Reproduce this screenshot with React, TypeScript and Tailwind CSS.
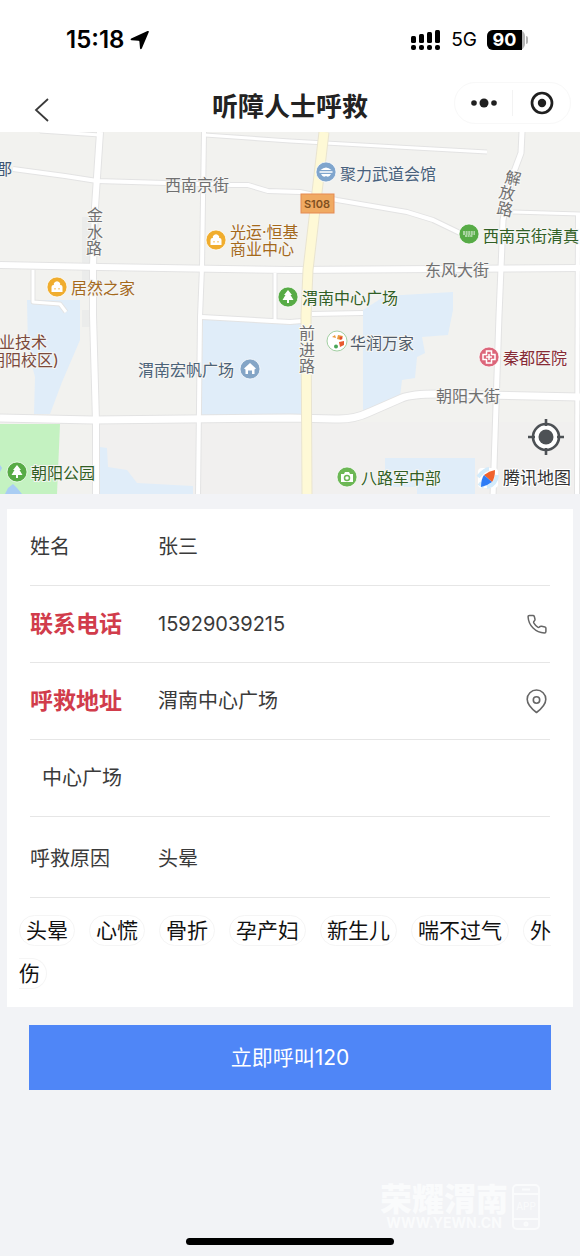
import { useState, type ReactNode } from 'react';

const REASONS = ['头晕', '心慌', '骨折', '孕产妇', '新生儿', '喘不过气', '外伤'];

const ROADS: { d: string; w: number }[] = [
  { d: 'M40 -1L100 3', w: 3 },
  { d: 'M13 37L65 44L97 49L166 51L232 53L248 53L268 59L300 60L337 68L407 80L433 88L460 101', w: 4 },
  { d: 'M205 3L290 9L487 20', w: 3 },
  { d: 'M204 0L202 135L200 185L198 365', w: 4 },
  { d: 'M513 80L580 82', w: 3 },
  { d: 'M578 82L577 365', w: 4 },
  { d: 'M33 138L33 170L60 172L66 180', w: 3 },
  { d: 'M275 141L275 190', w: 3 },
  { d: 'M202 185L290 190L302 189', w: 4 },
  { d: 'M312 182L363 181', w: 4 },
  { d: 'M522 0L521 21L512 45L503 88L501 136L499 183L493 365', w: 5 },
  { d: 'M100 0L95 75L93 134L93 183L96 290L96 365', w: 6 },
  { d: 'M0 133L100 135L290 138L580 136', w: 6 },
  { d: 'M0 286L93 288L290 286L335 287Q353 288 370 280L402 266Q412 262 437 262L580 265', w: 7 },
];

function MapLabel({ x, y, color, children }: { x: number; y: number; color: string; children: ReactNode }) {
  return (
    <text x={x} y={y} fill={color} stroke="#f5f5f3" strokeWidth={2} paintOrder="stroke">
      {children}
    </text>
  );
}

function RoadName({ name, points, angle = 0 }: { name: string; points: [number, number][]; angle?: number }) {
  return (
    <g fill="#707070" textAnchor="middle" stroke="#f8f8f6" strokeWidth={2} paintOrder="stroke">
      {points.map(([x, y], i) => (
        <text key={name[i]} x={x} y={y + 6} transform={`rotate(${angle} ${x} ${y})`}>
          {name[i]}
        </text>
      ))}
    </g>
  );
}

function Poi({ x, y, color, children }: { x: number; y: number; color: string; children: ReactNode }) {
  return (
    <g transform={`translate(${x} ${y})`}>
      <circle r={10} fill={color} stroke="#fff" strokeOpacity={0.7} />
      {children}
    </g>
  );
}

const tree = <path d="M0 -7L4 -2H2.500L5.500 3H1V6H-1V3H-5.500L-2.500 -2H-4Z" fill="#fff" />;

const bag = (
  <g>
    <path d="M-5.500 5V0Q-5.500 -2 -3.500 -2H3.500Q5.500 -2 5.500 0V5Z" fill="#fff" />
    <path d="M-2.500 -2V-3.500Q0 -6.500 2.500 -3.500V-2" fill="#fff" stroke="#fff" strokeWidth={1.3} />
    <path d="M-2 1V2.500M2 1V2.500" stroke="#f0ad2e" />
  </g>
);

function CityMap() {
  return (
    <svg
      viewBox="0 0 580 362"
      className="block w-full bg-[#f2f2ef] font-['Inter','Noto_Sans_CJK_SC',sans-serif] text-[16px]"
      role="img"
      aria-label="地图"
    >
      <rect x={97} y={290} width={480} height={72} fill="#f1f0ef" />
      <path d="M82 85H90V148H82ZM82 178H90V195H82Z" fill="#ebeceb" />
      <g fill="#e0edf9">
        <path d="M27 168H80V208L62 250L50 282H34L35 245L28 218Z" />
        <path d="M203 187L301 192V283H201Z" />
        <path d="M363 178L385 164L453 160V178L448 203L422 205L425 221L417 225L415 246L402 248L400 265L363 280Z" />
        <path d="M100 315L107 316L108 335L127 338L137 351L193 354V362H100Z" />
        <path d="M385 326H475V362H417V355H385Z" />
      </g>
      <path d="M0 292H60L57 362H0Z" fill="#c4f2c1" />
      <path d="M5 362L8 356L13 352L17 356L22 362ZM0 333L2 336L0 340Z" fill="#a9cdf3" />

      <g fill="none" stroke="#e3e3e3" strokeLinejoin="round">
        {ROADS.map((r) => (
          <path key={r.d} d={r.d} strokeWidth={r.w + 2} />
        ))}
      </g>
      <g fill="none" stroke="#fff" strokeLinejoin="round">
        {ROADS.map((r) => (
          <path key={r.d} d={r.d} strokeWidth={r.w} />
        ))}
      </g>
      <path d="M324 0L308 138L306 183L307 362" fill="none" stroke="#e9e4d0" strokeWidth={11} />
      <path d="M324 0L308 138L306 183L307 362" fill="none" stroke="#fef9d6" strokeWidth={9} />

      <rect x={301} y={62} width={33} height={19} fill="#f0aa62" stroke="#e58a52" />
      <text x={317} y={76} fontSize={11} fontWeight={600} textAnchor="middle" fill="#80501f">
        S108
      </text>

      <MapLabel x={-4} y={43} color="#3d5573">郡</MapLabel>
      <MapLabel x={165} y={59} color="#707070">西南京街</MapLabel>
      <MapLabel x={425} y={144} color="#707070">东风大街</MapLabel>
      <MapLabel x={436} y={270} color="#707070">朝阳大街</MapLabel>
      <RoadName name="金水路" points={[[95, 83], [95, 100], [94, 116]]} />
      <RoadName name="前进路" points={[[307, 201], [307, 218], [307, 234]]} />
      <RoadName name="解放路" points={[[513, 46], [507, 61], [505, 77]]} angle={12} />

      <Poi x={326} y={40} color="#7fa5cd">
        <path d="M-5.500 -2Q0 -7 5.500 -2ZM-6.500 -.8H6.500V.8H-6.500ZM-5 2H5Q3 6 0 4Q-3 6 -5 2Z" fill="#fff" />
      </Poi>
      <MapLabel x={340} y={48} color="#48617c">聚力武道会馆</MapLabel>

      <Poi x={216} y={108} color="#f0ad2e">{bag}</Poi>
      <MapLabel x={230} y={106} color="#a4691c">光运·恒基</MapLabel>
      <MapLabel x={230} y={123} color="#a4691c">商业中心</MapLabel>

      <Poi x={57} y={155} color="#f0ad2e">{bag}</Poi>
      <MapLabel x={71} y={162} color="#a4691c">居然之家</MapLabel>

      <Poi x={469} y={102} color="#57ab46">
        <path d="M-6 -2H6M-6 0H6M-4 2H4" stroke="#fff" strokeWidth={1.2} strokeDasharray="2 .6" />
      </Poi>
      <MapLabel x={483} y={110} color="#315f25">西南京街清真</MapLabel>

      <Poi x={288} y={165} color="#57ab46">{tree}</Poi>
      <MapLabel x={302} y={172} color="#315f25">渭南中心广场</MapLabel>

      <MapLabel x={-1} y={216} color="#7b4a3c">业技术</MapLabel>
      <MapLabel x={-11} y={234} color="#7b4a3c">朝阳校区)</MapLabel>

      <MapLabel x={138} y={244} color="#4c6378">渭南宏帆广场</MapLabel>
      <Poi x={250} y={237} color="#84a5c6">
        <path d="M0 -6L6 -.5L4.500 .5V5H2V1.500H-2V5H-4.500V.5L-6 -.5Z" fill="#fff" />
      </Poi>

      <g transform="translate(337 209)">
        <circle r={10} fill="#fff" stroke="#a3d0a3" />
        <path d="M-5 -4L-2 -6L-1 -3ZM1 -6L6 -5L4 -1L0 -2Z" fill="#ec9a3c" />
        <path d="M2 1L7 0L7 4L3 6Z" fill="#e85a2e" />
        <circle cx={-1} cy={5.500} r={2} fill="#4aa658" />
        <circle cx={4} cy={-3} r={1.500} fill="#e24b32" />
      </g>
      <MapLabel x={350} y={217} color="#505b69">华润万家</MapLabel>

      <Poi x={489} y={225} color="#dc667a">
        <path d="M-2.500 -6H2.500V-2.500H6V2.500H2.500V6H-2.500V2.500H-6V-2.500H-2.500Z" fill="none" stroke="#fff" strokeWidth={1.500} />
        <path d="M0 -3V3M-3 0H3" stroke="#fff" strokeWidth={1.500} />
      </Poi>
      <MapLabel x={503} y={232} color="#872b35">秦都医院</MapLabel>

      <Poi x={17} y={340} color="#57ab46">{tree}</Poi>
      <MapLabel x={31} y={347} color="#315f25">朝阳公园</MapLabel>

      <Poi x={347} y={345} color="#6cb755">
        <path d="M-6 -3H-3L-2 -5H2L3 -3H6V5H-6Z" fill="#fff" />
        <circle cy={1} r={2.500} fill="none" stroke="#6cb755" strokeWidth={1.500} />
      </Poi>
      <MapLabel x={361} y={352} color="#315f25">八路军中部</MapLabel>

      <g transform="translate(488 346)">
        <rect x={-10} y={-10} width={20} height={20} rx={4} fill="#fff" />
        <path d="M-10 -1Q-3 -9 1 -9M-1 9Q8 7 9 -3M-9 5L-4 9" fill="none" stroke="#d3ebfb" strokeWidth={4} />
        <path d="M7 -8Q7 0 4 4L-4 -3Q1 -7 7 -8Z" fill="#f0622d" />
        <path d="M-7 9Q-7 1 -4 -3L4 4Q-1 8 -7 9Z" fill="#2e7cf6" />
      </g>
      <text x={503} y={352} fontSize={17} fill="#333" stroke="#fff" strokeWidth={2} paintOrder="stroke">
        腾讯地图
      </text>
    </svg>
  );
}

function StatusBar() {
  return (
    <div className="flex h-20 items-center justify-between pr-[52px] pl-[66px] text-black">
      <div className="flex items-center gap-1.5">
        <span className="text-2xl font-semibold">15:18</span>
        <svg width="20" height="20" viewBox="0 0 20 20">
          <path d="M17.500 1Q19.400 .5 18.700 2.300L11.800 18.500Q10.500 20 10 18.200L9.400 11.600Q9.300 10.800 8.500 10.700L1.600 10.300Q-.2 9.700 1.200 8.500Z" />
        </svg>
      </div>
      <div className="flex items-center gap-2.5">
        <svg width="31" height="20" viewBox="0 0 31 20">
          <rect x="1" y="6" width="5" height="7" rx="1.500" />
          <rect x="9" y="4" width="5" height="9" rx="1.500" />
          <rect x="17" y="2" width="5" height="11" rx="1.500" />
          <rect x="25" y="0" width="5" height="13" rx="1.500" />
          <rect x="1" y="15" width="5" height="5" rx="2" />
          <rect x="9" y="15" width="5" height="5" rx="2" />
          <rect x="17" y="15" width="5" height="5" rx="2" />
          <rect x="25" y="15" width="5" height="5" rx="2" />
        </svg>
        <span className="text-[19px]">5G</span>
        <div className="flex items-center gap-px">
          <span className="flex h-5 w-[38px] items-center rounded-md bg-[#b5b5b5] pr-[3px]">
            <span className="h-5 w-full rounded-l-md bg-black text-center text-[18px] leading-5 font-bold text-white">90</span>
          </span>
          <span className="h-2 w-0.5 rounded-r bg-[#b5b5b5]" />
        </div>
      </div>
    </div>
  );
}

function Header() {
  return (
    <header className="flex h-[52px] items-start pt-0.5">
      <div className="flex-1">
        <button type="button" aria-label="返回" className="flex h-14 items-center pl-[34px]">
          <svg width="16" height="24" viewBox="0 0 16 24" fill="none" stroke="#3a3a3a" strokeWidth="1.800">
            <path d="M14 1L2 12L14 23" />
          </svg>
        </button>
      </div>
      <h1 className="text-[26px] leading-[50px] font-bold text-[#222]">听障人士呼救</h1>
      <div className="flex flex-1 justify-end">
        <div className="mr-[9px] flex h-[42px] w-[117px] items-center rounded-full border border-[#f8f8f8] bg-white">
          <button type="button" aria-label="更多" className="flex flex-1 justify-center border-r border-[#f3f3f3] py-2">
            <svg width="26" height="10" viewBox="0 0 26 10" fill="#1f1f1f">
              <circle cx="3" cy="5" r="2.800" />
              <circle cx="13" cy="5" r="4.500" />
              <circle cx="23" cy="5" r="2.800" />
            </svg>
          </button>
          <button type="button" aria-label="关闭" className="flex flex-1 justify-center">
            <svg width="24" height="24" viewBox="0 0 24 24">
              <circle cx="12" cy="12" r="10" fill="none" stroke="#1f1f1f" strokeWidth="2.700" />
              <circle cx="12" cy="12" r="4.200" fill="#1f1f1f" />
            </svg>
          </button>
        </div>
      </div>
    </header>
  );
}

interface FieldProps {
  id: string;
  label: string;
  value: string;
  onChange: (value: string) => void;
  important?: boolean;
  tall?: boolean;
  action?: ReactNode;
}

function Field({ id, label, value, onChange, important, tall, action }: FieldProps) {
  return (
    <div className={`flex items-center border-b border-[#e6e6e6] ${tall ? 'h-[81px] pt-1' : 'h-[77px]'}`}>
      <label
        htmlFor={id}
        className={`w-32 shrink-0 ${important ? 'text-[23px] font-bold text-[#d13c4b]' : 'text-xl text-[#3a3a3a]'}`}
      >
        {label}
      </label>
      <input
        id={id}
        value={value}
        onChange={(e) => onChange(e.target.value)}
        className="min-w-0 flex-1 text-xl text-[#3a3a3a] outline-none"
      />
      {action}
    </div>
  );
}

export default function App() {
  const [name, setName] = useState('张三');
  const [phone, setPhone] = useState('15929039215');
  const [address, setAddress] = useState('渭南中心广场');
  const [detail, setDetail] = useState('中心广场');
  const [reason, setReason] = useState('头晕');

  return (
    <div className="flex min-h-screen flex-col bg-[#f2f3f6] font-['Inter','Noto_Sans_CJK_SC',sans-serif]">
      <div className="bg-white">
        <StatusBar />
        <Header />
      </div>

      <div className="relative">
        <CityMap />
        <button type="button" aria-label="定位" className="absolute right-4 bottom-[39px]">
          <svg width="36" height="36" viewBox="0 0 36 36">
            <circle cx="18" cy="18" r="13" fill="#fff" stroke="#4d5155" strokeWidth="2.600" />
            <circle cx="18" cy="18" r="7.500" fill="#4d5155" />
            <path d="M18 0V7M18 29V36M0 18H7M29 18H36" stroke="#4d5155" strokeWidth="2.600" />
          </svg>
        </button>
      </div>

      <form onSubmit={(e) => e.preventDefault()}>
        <div className="mx-[7px] mt-[15px] bg-white pb-3">
          <div className="mx-[23px]">
            <Field id="name" label="姓名" value={name} onChange={setName} />
            <Field
              id="phone"
              label="联系电话"
              value={phone}
              onChange={setPhone}
              important
              action={
                <button type="button" aria-label="拨打电话" className="pr-[3px]">
                  <svg width="20" height="20" viewBox="0 0 20 20" fill="none" stroke="#666" strokeWidth="1.500" strokeLinejoin="round">
                    <path d="M2.500 1.500H6Q7 1.500 7.300 2.400L8 5.200Q8.200 6.100 7.500 6.700L6.800 7.500Q6.300 8.300 6.900 9.200Q8.500 11.800 10.700 13.200Q11.700 13.700 12.400 12.900Q13.400 11.900 14.700 12.200L17.900 12.900Q18.900 13.200 18.900 14.100V17.500Q18.900 19 17.400 19C8.500 18.700 1.600 11.500 1.100 3Q1 1.500 2.500 1.500Z" />
                  </svg>
                </button>
              }
            />
            <Field
              id="address"
              label="呼救地址"
              value={address}
              onChange={setAddress}
              important
              action={
                <button type="button" aria-label="选择位置" className="pr-[3px]">
                  <svg width="21" height="25" viewBox="0 0 21 25" fill="none" stroke="#666" strokeWidth="1.600" strokeLinejoin="round">
                    <path d="M10.500 23.500C6.500 20.500 1.200 15.800 1.200 10.300A9.300 9.300 0 0 1 19.800 10.300C19.800 15.800 14.500 20.500 10.500 23.500Z" />
                    <circle cx="10.500" cy="11" r="3.200" />
                  </svg>
                </button>
              }
            />
            <div className="flex h-[77px] items-center border-b border-[#e6e6e6]">
              <input
                aria-label="详细地址"
                value={detail}
                onChange={(e) => setDetail(e.target.value)}
                className="w-full px-3 text-xl text-[#3a3a3a] outline-none"
              />
            </div>
            <Field id="reason" label="呼救原因" value={reason} onChange={setReason} tall />
          </div>

          <div className="mx-3 pt-[11px] text-[21px] leading-[43px] text-[#111]">
            {REASONS.map((r) => (
              <a
                key={r}
                href="#reason"
                onClick={() => setReason(r)}
                className="mr-3.5 rounded-full border border-[#f5f5f5] px-1.5 py-0.5"
              >
                {r}
              </a>
            ))}
          </div>
        </div>

        <div className="mx-[29px] mt-[18px]">
          <button type="submit" className="h-[65px] w-full bg-[#4f86f7] text-[21px] text-white">
            立即呼叫120
          </button>
        </div>
      </form>

      <div className="mt-auto mr-10 flex items-center gap-1 self-end text-[#fafbfc]">
        <div className="text-center">
          <div className="text-[32px] leading-8 font-black">荣耀渭南</div>
          <div className="text-sm leading-3.5 font-bold">WWW.YEWN.CN</div>
        </div>
        <svg width="28" height="46" viewBox="0 0 28 46" fill="none" stroke="currentColor" strokeWidth="2">
          <rect x="1" y="1" width="26" height="44" rx="4" />
          <path d="M1 10H27M1 35H27M10 5.500H18" />
          <circle cx="14" cy="40" r="1.500" />
          <text x="14" y="26" fontSize="10" textAnchor="middle" fill="currentColor" stroke="none">
            APP
          </text>
        </svg>
      </div>
      <div className="mx-auto mt-2 mb-[11px] h-[7px] w-52 rounded-full bg-black" />
    </div>
  );
}
